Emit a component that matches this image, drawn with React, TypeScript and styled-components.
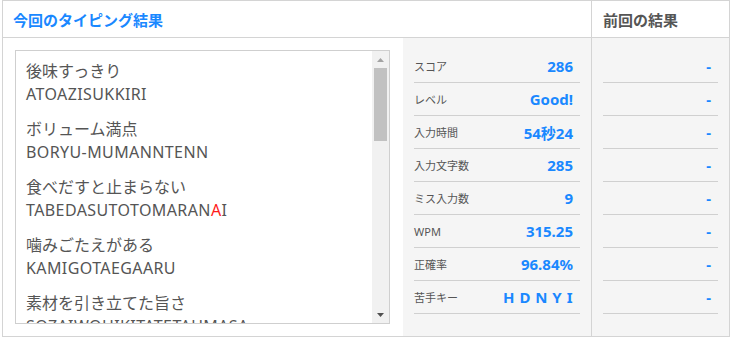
import React from 'react';
import styled, {createGlobalStyle} from 'styled-components';

const GlobalStyle = createGlobalStyle`
  html, body {
    margin: 0;
    padding: 0;
    background: #fff;
  }
  body {
    font-family: "Noto Sans", "Noto Sans CJK JP", sans-serif;
    color: #555;
  }
`;

const BLUE = '#1a88ff';
const LINE = '#d4d4d4';

const Table = styled.div`
  margin-left: 2px;
  width: 728px;
  box-sizing: border-box;
  border: 1px solid ${LINE};
  display: grid;
  grid-template-columns: 400px 188px 138px;
  grid-template-rows: 37px 298px;
`;

const HeadCell = styled.div<{$span?: number; $current?: boolean}>`
  grid-column: span ${({$span}) => $span ?? 1};
  border-bottom: 1px solid ${LINE};
  border-left: ${({$current}) => ($current ? 'none' : `1px solid ${LINE}`)};
  padding-left: ${({$current}) => ($current ? '10px' : '11px')};
  display: flex;
  align-items: center;
  font-size: 15px;
  font-weight: bold;
  color: ${({$current}) => ($current ? BLUE : '#555')};
`;

const ListCell = styled.div`
  padding: 12px 13px 13px 12px;
  background: #fff;
`;

const ListBox = styled.div`
  display: flex;
  height: 274px;
  box-sizing: border-box;
  border: 1px solid #cfcfcf;
  background: #fff;
`;

const ListContent = styled.div`
  flex: 1;
  overflow: hidden;
  padding: 9px 10px 0;
`;

const Item = styled.div`
  font-size: 16px;
  line-height: 23px;
  color: #555;
  margin-bottom: 12px;
  white-space: nowrap;
`;

const Romaji = styled.div`
  letter-spacing: 0.4px;
`;

const Miss = styled.span`
  color: #ff1a1a;
`;

const ScrollTrack = styled.div`
  width: 17px;
  background: #f1f1f1;
  display: flex;
  flex-direction: column;
`;

const ScrollButton = styled.div`
  height: 17px;
  display: flex;
  align-items: center;
  justify-content: center;
`;

const ScrollThumb = styled.div`
  height: 73px;
  margin: 0 2px 0 2px;
  background: #c1c1c1;
`;

const ScrollSpacer = styled.div`
  flex: 1;
`;

const StatsCell = styled.div`
  background: #f5f5f5;
  padding: 12px 11px 0;
`;

const PrevCell = styled.div`
  background: #f5f5f5;
  border-left: 1px solid ${LINE};
  padding: 12px 11px 0;
`;

const StatRow = styled.div`
  height: 32px;
  border-bottom: 1px solid #d0d0d0;
  display: flex;
  align-items: center;
  justify-content: space-between;
  padding-right: 7px;
`;

const Label = styled.span`
  font-size: 11px;
  color: #555;
`;

const Value = styled.span<{$spaced?: boolean}>`
  font-size: 15px;
  font-weight: bold;
  color: ${BLUE};
  letter-spacing: ${({$spaced}) => ($spaced ? '0.5px' : '0')};
  white-space: pre;
`;

const items: {kana: string; roma: React.ReactNode}[] = [
  {kana: '後味すっきり', roma: 'ATOAZISUKKIRI'},
  {kana: 'ボリューム満点', roma: 'BORYU-MUMANNTENN'},
  {
    kana: '食べだすと止まらない',
    roma: (
      <>
        TABEDASUTOTOMARAN<Miss>A</Miss>I
      </>
    ),
  },
  {kana: '噛みごたえがある', roma: 'KAMIGOTAEGAARU'},
  {kana: '素材を引き立てた旨さ', roma: 'SOZAIWOHIKITATETAUMASA'},
  {kana: '濃厚な味わい', roma: 'NOUKOUNAAZIWAI'},
  {kana: '香ばしい風味', roma: 'KOUBASIIHUUMI'},
  {kana: 'とろける食感', roma: 'TOROKERUSYOKKANN'},
  {kana: '甘さひかえめ', roma: 'AMASAHIKAEME'},
  {kana: '口どけなめらか', roma: 'KUTIDOKENAMERAKA'},
  {kana: '素朴な味わい', roma: 'SOBOKUNAAZIWAI'},
  {kana: 'クセになる食感', roma: 'KUSENINARUSYOKKANN'},
  {kana: 'あとをひく旨さ', roma: 'ATOWOHIKUUMASA'},
  {kana: '季節限定の味', roma: 'KISETUGENNTEINOAZI'},
  {kana: 'まろやかな甘み', roma: 'MAROYAKANAAMAMI'},
];

const stats: {label: string; value: string; spaced?: boolean}[] = [
  {label: 'スコア', value: '286'},
  {label: 'レベル', value: 'Good!'},
  {label: '入力時間', value: '54秒24'},
  {label: '入力文字数', value: '285'},
  {label: 'ミス入力数', value: '9'},
  {label: 'WPM', value: '315.25'},
  {label: '正確率', value: '96.84%'},
  {label: '苦手キー', value: 'H D N Y I', spaced: true},
];

const Arrow = ({up}: {up?: boolean}) => (
  <svg width="7" height="4" viewBox="0 0 7 4">
    {up ? (
      <path d="M3.5 0L7 4H0z" fill="#a3a3a3" />
    ) : (
      <path d="M0 0h7L3.5 4z" fill="#505050" />
    )}
  </svg>
);

export default function App() {
  return (
    <>
      <GlobalStyle />
      <Table>
        <HeadCell $span={2} $current>
          今回のタイピング結果
        </HeadCell>
        <HeadCell>前回の結果</HeadCell>

        <ListCell>
          <ListBox>
            <ListContent>
              {items.map((it, i) => (
                <Item key={i}>
                  <div>{it.kana}</div>
                  <Romaji>{it.roma}</Romaji>
                </Item>
              ))}
            </ListContent>
            <ScrollTrack>
              <ScrollButton>
                <Arrow up />
              </ScrollButton>
              <ScrollThumb />
              <ScrollSpacer />
              <ScrollButton>
                <Arrow />
              </ScrollButton>
            </ScrollTrack>
          </ListBox>
        </ListCell>

        <StatsCell>
          {stats.map((s) => (
            <StatRow key={s.label}>
              <Label>{s.label}</Label>
              <Value $spaced={s.spaced}>{s.value}</Value>
            </StatRow>
          ))}
        </StatsCell>

        <PrevCell>
          {stats.map((s) => (
            <StatRow key={s.label}>
              <span />
              <Value>-</Value>
            </StatRow>
          ))}
        </PrevCell>
      </Table>
    </>
  );
}
